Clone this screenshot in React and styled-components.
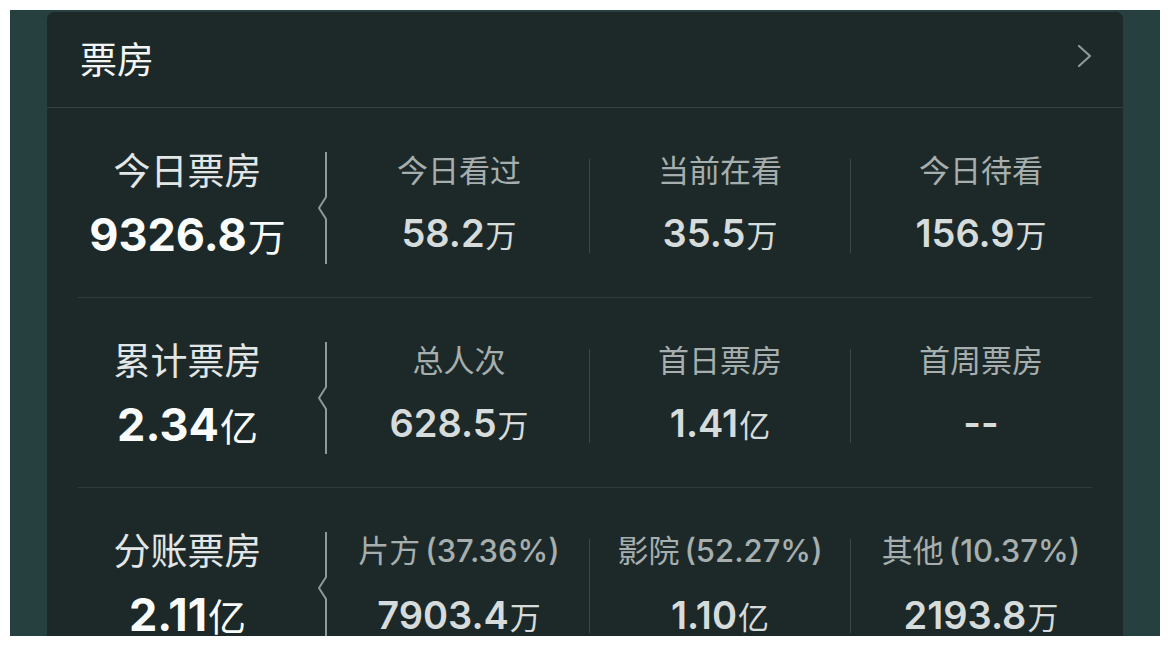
import React from 'react';
import styled, { createGlobalStyle } from 'styled-components';

const GlobalStyle = createGlobalStyle`
  html, body {
    margin: 0;
    padding: 0;
    background: #ffffff;
  }
  body {
    font-family: "Noto Sans CJK SC", "Noto Sans", sans-serif;
  }
`;

const rows = [
  {
    title: '今日票房',
    value: '9326.8',
    unit: '万',
    items: [
      { label: '今日看过', value: '58.2', unit: '万' },
      { label: '当前在看', value: '35.5', unit: '万' },
      { label: '今日待看', value: '156.9', unit: '万' },
    ],
  },
  {
    title: '累计票房',
    value: '2.34',
    unit: '亿',
    items: [
      { label: '总人次', value: '628.5', unit: '万' },
      { label: '首日票房', value: '1.41', unit: '亿' },
      { label: '首周票房', value: '--', unit: '' },
    ],
  },
  {
    title: '分账票房',
    value: '2.11',
    unit: '亿',
    items: [
      { label: '片方', pct: '(37.36%)', value: '7903.4', unit: '万' },
      { label: '影院', pct: '(52.27%)', value: '1.10', unit: '亿' },
      { label: '其他', pct: '(10.37%)', value: '2193.8', unit: '万' },
    ],
  },
];

const Bracket = () => (
  <svg width="14" height="112" viewBox="0 0 14 112">
    <polyline
      points="11,0 11,45 4,56 11,67 11,112"
      fill="none"
      stroke="#8f9999"
      strokeWidth="2"
      strokeLinejoin="round"
    />
  </svg>
);

const Chevron = () => (
  <svg width="18" height="26" viewBox="0 0 18 26">
    <polyline
      points="4,3 15,13 4,23"
      fill="none"
      stroke="#8e9797"
      strokeWidth="2.2"
      strokeLinecap="round"
      strokeLinejoin="round"
    />
  </svg>
);

const App = () => {
  return (
    <Page>
      <GlobalStyle />
      <Backdrop>
        <Card>
          <Header>
            <HeaderTitle>票房</HeaderTitle>
            <ChevronBox>
              <Chevron />
            </ChevronBox>
          </Header>
          <Body>
            {rows.map((row) => (
              <Row key={row.title}>
                <Lead>
                  <LeadLabel>{row.title}</LeadLabel>
                  <LeadValue>
                    {row.value}
                    <Unit $size={38}>{row.unit}</Unit>
                  </LeadValue>
                </Lead>
                <BracketCell>
                  <Bracket />
                </BracketCell>
                {row.items.map((item, i) => (
                  <Stat key={item.label} $divider={i > 0}>
                    <StatLabel>
                      {item.label}
                      {item.pct && <Pct>{item.pct}</Pct>}
                    </StatLabel>
                    <StatValue>
                      {item.value}
                      {item.unit && <Unit $size={31}>{item.unit}</Unit>}
                    </StatValue>
                  </Stat>
                ))}
              </Row>
            ))}
          </Body>
        </Card>
      </Backdrop>
    </Page>
  );
};

export default App;

const Page = styled.div`
  width: 1170px;
  height: 646px;
  padding: 10px;
  box-sizing: border-box;
  background: #ffffff;
`;

const Backdrop = styled.div`
  width: 1150px;
  height: 626px;
  background: #263f3f;
  overflow: hidden;
  padding: 2px 0 0 37px;
  box-sizing: border-box;
`;

const Card = styled.div`
  width: 1076px;
  height: 700px;
  background: #1d2929;
  border-radius: 7px 7px 0 0;
`;

const Header = styled.div`
  height: 95px;
  display: flex;
  align-items: center;
  justify-content: space-between;
  padding: 0 30px 0 33px;
  border-bottom: 1px solid #344141;
`;

const HeaderTitle = styled.div`
  font-family: "Noto Sans CJK SC", sans-serif;
  font-size: 37px;
  font-weight: 400;
  color: #f3f5f5;
  line-height: 1;
  margin-top: -3px;
`;

const ChevronBox = styled.div`
  display: flex;
  margin-bottom: 8px;
`;

const Body = styled.div`
  padding: 0 31px;
`;

const Row = styled.div`
  height: 190px;
  box-sizing: border-box;
  display: grid;
  grid-template-columns: 219px 31px 261px 261px 261px;
  align-items: start;
  border-bottom: 1px solid #2f3b3b;
`;

const Lead = styled.div`
  padding-top: 37px;
  display: flex;
  flex-direction: column;
  align-items: center;
`;

const LeadLabel = styled.div`
  font-family: "Noto Sans CJK SC", sans-serif;
  font-size: 37px;
  font-weight: 400;
  line-height: 48px;
  color: #e2e6e6;
`;

const LeadValue = styled.div`
  margin-top: 18px;
  font-family: "Inter", "Noto Sans CJK SC", sans-serif;
  font-size: 45px;
  font-weight: 700;
  line-height: 48px;
  color: #fafbfb;
  white-space: nowrap;
`;

const Unit = styled.span`
  font-family: "Noto Sans CJK SC", sans-serif;
  font-size: ${(p) => p.$size}px;
  font-weight: 400;
  margin-left: 1px;
`;

const BracketCell = styled.div`
  display: flex;
  justify-content: flex-end;
  margin-top: 44px;
  margin-right: -1px;
`;

const Stat = styled.div`
  margin-top: 51px;
  height: 94px;
  display: flex;
  flex-direction: column;
  align-items: center;
  border-left: 1px solid ${(p) => (p.$divider ? '#3a4747' : 'transparent')};
`;

const StatLabel = styled.div`
  margin-top: -4px;
  font-family: "Noto Sans CJK SC", sans-serif;
  font-size: 31px;
  font-weight: 400;
  line-height: 28px;
  color: #a6aeae;
  white-space: nowrap;
`;

const Pct = styled.span`
  font-family: "Inter", sans-serif;
  font-size: 31px;
  font-weight: 500;
  margin-left: 5px;
`;

const StatValue = styled.div`
  margin-top: 36px;
  font-family: "Inter", "Noto Sans CJK SC", sans-serif;
  font-size: 38px;
  font-weight: 600;
  line-height: 28px;
  color: #d6dbdb;
  white-space: nowrap;
`;
